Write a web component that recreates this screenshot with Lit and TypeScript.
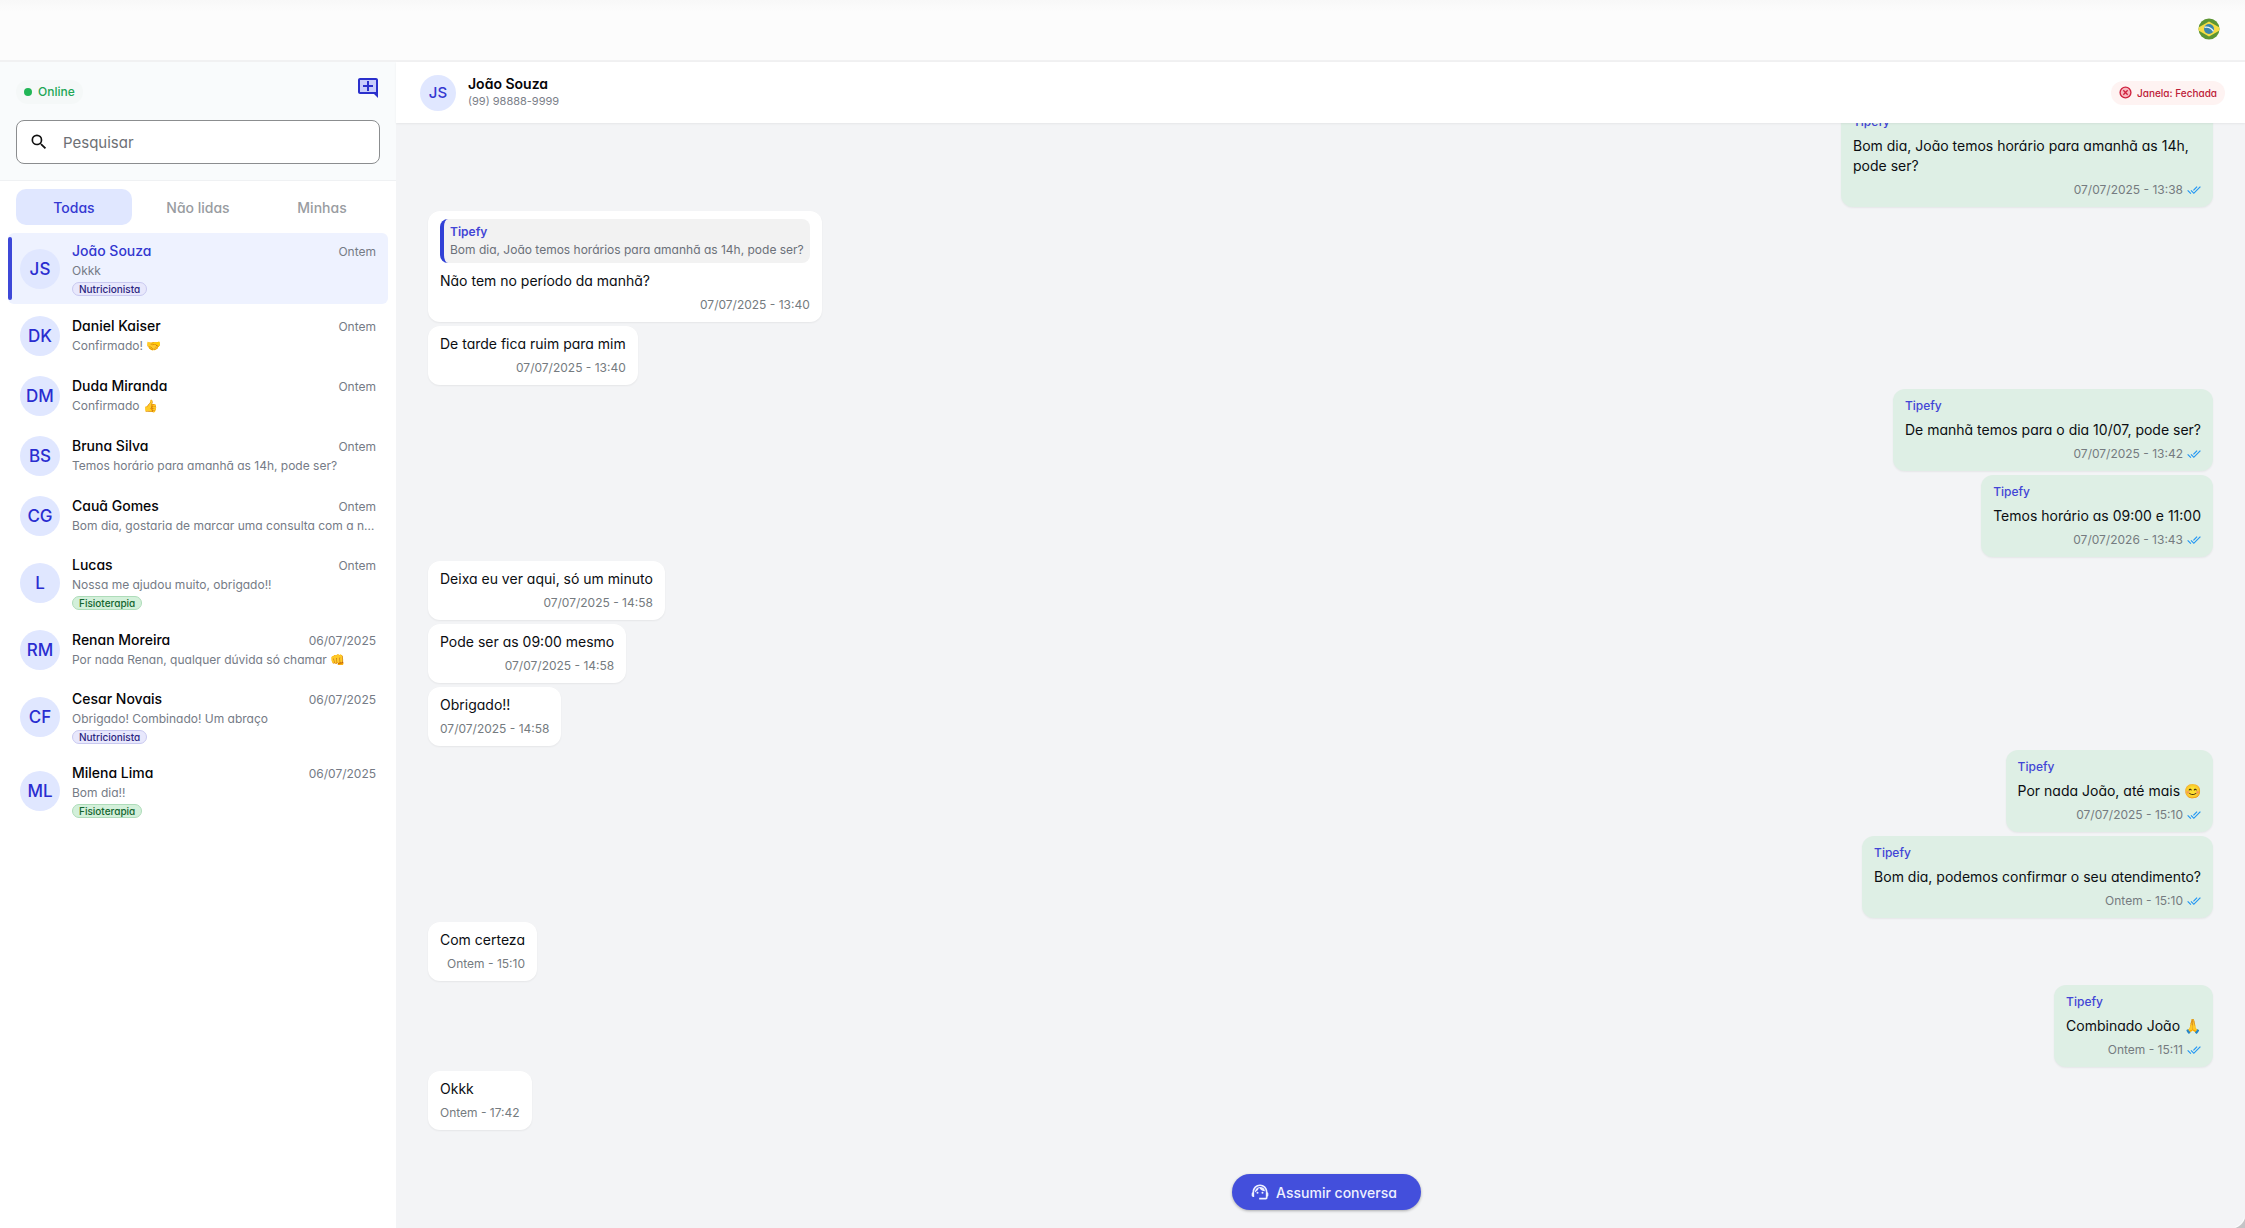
import { LitElement, html, css, nothing } from "lit";
import { customElement, property, state } from "lit/decorators.js";

interface Chat {
  initials: string;
  name: string;
  preview: string;
  date: string;
  tag?: "Nutricionista" | "Fisioterapia";
}

interface Message {
  out?: boolean;
  text: string;
  time: string;
  quote?: string;
}

const CHATS: Chat[] = [
  { initials: "JS", name: "João Souza", preview: "Okkk", date: "Ontem", tag: "Nutricionista" },
  { initials: "DK", name: "Daniel Kaiser", preview: "Confirmado! 🤝", date: "Ontem" },
  { initials: "DM", name: "Duda Miranda", preview: "Confirmado 👍", date: "Ontem" },
  { initials: "BS", name: "Bruna Silva", preview: "Temos horário para amanhã as 14h, pode ser?", date: "Ontem" },
  { initials: "CG", name: "Cauã Gomes", preview: "Bom dia, gostaria de marcar uma consulta com a nutricionista", date: "Ontem" },
  { initials: "L", name: "Lucas", preview: "Nossa me ajudou muito, obrigado!!", date: "Ontem", tag: "Fisioterapia" },
  { initials: "RM", name: "Renan Moreira", preview: "Por nada Renan, qualquer dúvida só chamar 👊", date: "06/07/2025" },
  { initials: "CF", name: "Cesar Novais", preview: "Obrigado! Combinado! Um abraço", date: "06/07/2025", tag: "Nutricionista" },
  { initials: "ML", name: "Milena Lima", preview: "Bom dia!!", date: "06/07/2025", tag: "Fisioterapia" },
];

const MESSAGES: Message[] = [
  { out: true, text: "Bom dia, João temos horário para amanhã as 14h, pode ser?", time: "07/07/2025 - 13:38" },
  { text: "Não tem no período da manhã?", time: "07/07/2025 - 13:40", quote: "Bom dia, João temos horários para amanhã as 14h, pode ser?" },
  { text: "De tarde fica ruim para mim", time: "07/07/2025 - 13:40" },
  { out: true, text: "De manhã temos para o dia 10/07, pode ser?", time: "07/07/2025 - 13:42" },
  { out: true, text: "Temos horário as 09:00 e 11:00", time: "07/07/2026 - 13:43" },
  { text: "Deixa eu ver aqui, só um minuto", time: "07/07/2025 - 14:58" },
  { text: "Pode ser as 09:00 mesmo", time: "07/07/2025 - 14:58" },
  { text: "Obrigado!!", time: "07/07/2025 - 14:58" },
  { out: true, text: "Por nada João, até mais 😊", time: "07/07/2025 - 15:10" },
  { out: true, text: "Bom dia, podemos confirmar o seu atendimento?", time: "Ontem - 15:10" },
  { text: "Com certeza", time: "Ontem - 15:10" },
  { out: true, text: "Combinado João 🙏", time: "Ontem - 15:11" },
  { text: "Okkk", time: "Ontem - 17:42" },
];

@customElement("chat-row")
export class ChatRow extends LitElement {
  @property({ attribute: false }) chat!: Chat;
  @property({ type: Boolean, reflect: true }) selected = false;

  static styles = css`
    :host { display: block; padding: 0 8px; }
    .row {
      position: relative;
      display: flex;
      align-items: center;
      gap: 12px;
      width: 100%;
      min-height: 57px;
      padding: 8px 12px;
      border: 0;
      border-radius: 6px;
      background: none;
      font: inherit;
      font-feature-settings: inherit;
      text-align: left;
      cursor: pointer;
    }
    .row.selected { background: #eef2ff; }
    .row.selected::before {
      content: "";
      position: absolute;
      inset: 4px auto 4px 0;
      width: 4px;
      border-radius: 2px;
      background: #3d48d8;
    }
    .avatar {
      flex: none;
      display: grid;
      place-items: center;
      width: 40px;
      height: 40px;
      border-radius: 50%;
      background: #e0e7ff;
      color: #2a2dd0;
      font-size: 17px;
      font-weight: 500;
    }
    .body { flex: 1; min-width: 0; display: block; }
    .top { display: flex; justify-content: space-between; align-items: baseline; }
    .name { font-size: 14px; line-height: 20px; font-weight: 500; color: #050508; }
    .selected .name { color: #3338d0; }
    .date, .preview { font-size: 12px; line-height: 19px; color: #757b86; }
    .preview { display: block; white-space: nowrap; overflow: hidden; text-overflow: ellipsis; }
    .tag {
      display: block;
      width: max-content;
      margin-top: 2px;
      padding: 0 6px;
      border: 1px solid;
      border-radius: 8px;
      font-size: 10px;
      line-height: 12px;
      font-weight: 500;
    }
    .purple { color: #2b2580; background: #e8e8fc; border-color: #c9c9f0; }
    .green { color: #14652f; background: #d3f0da; border-color: #aedcb9; }
  `;

  render() {
    const c = this.chat;
    return html`
      <button class="row ${this.selected ? "selected" : ""}" type="button">
        <span class="avatar">${c.initials}</span>
        <span class="body">
          <span class="top"><span class="name">${c.name}</span><span class="date">${c.date}</span></span>
          <span class="preview">${c.preview}</span>
          ${c.tag ? html`<span class="tag ${c.tag === "Nutricionista" ? "purple" : "green"}">${c.tag}</span>` : nothing}
        </span>
      </button>`;
  }
}

@customElement("chat-message")
export class ChatMessage extends LitElement {
  @property({ attribute: false }) message!: Message;

  static styles = css`
    :host { display: flex; }
    .bubble {
      max-width: 348px;
      padding: 8px 12px;
      border-radius: 12px;
      background: #fff;
      box-shadow: 0 1px 2px rgb(0 0 0 / 6%);
      color: #0b0e12;
    }
    .bubble.quoted { max-width: none; }
    .bubble.out { margin-left: auto; background: #deefe5; }
    .author { font-size: 12px; line-height: 18px; font-weight: 500; color: #4245d6; }
    .quote .author { font-weight: 600; }
    .text { margin: 0; font-size: 14px; line-height: 20px; }
    .out .text { margin-top: 5px; }
    .quote {
      margin-bottom: 8px;
      padding: 4px 6px;
      border-left: 4px solid #3040d6;
      border-radius: 8px;
      background: #f2f2f2;
      font-size: 12px;
      line-height: 18px;
      color: #6b7079;
    }
    .meta {
      display: flex;
      justify-content: flex-end;
      align-items: center;
      gap: 4px;
      margin-top: 4px;
      font-size: 12px;
      line-height: 19px;
      color: #757b80;
    }
    .check { width: 14px; height: 14px; fill: #2196f3; }
  `;

  render() {
    const m = this.message;
    return html`
      <article class="bubble ${m.out ? "out" : ""} ${m.quote ? "quoted" : ""}">
        ${m.out ? html`<div class="author">Tipefy</div>` : nothing}
        ${m.quote ? html`<div class="quote"><div class="author">Tipefy</div>${m.quote}</div>` : nothing}
        <p class="text">${m.text}</p>
        <div class="meta">
          <span>${m.time}</span>
          ${m.out
            ? html`<svg class="check" viewBox="0 0 24 24" aria-label="Lida"><path d="m18 7-1.4-1.4-6.3 6.3 1.4 1.4zm4.200-1.400L11.700 16.200l-4.200-4.200-1.400 1.400 5.600 5.600 12-12zM.4 13.400 6 19l1.400-1.400L1.800 12z"/></svg>`
            : nothing}
        </div>
      </article>`;
  }
}

@customElement("app-root")
export class AppRoot extends LitElement {
  @state() private tab = "Todas";

  static styles = css`
    :host {
      display: block;
      font-family: Inter, "Liberation Sans", sans-serif;
      font-feature-settings: "cv11";
    }
    * { box-sizing: border-box; }
    .page { position: relative; display: flex; flex-direction: column; height: 100vh; min-height: 600px; background: #fff; }
    .corner {
      position: absolute;
      right: 0;
      bottom: 0;
      width: 10px;
      height: 10px;
      background: radial-gradient(circle at -4px -4px, transparent 13px, #fff 14px, #c4c4c6 15px);
    }
    .topbar {
      flex: none;
      display: flex;
      justify-content: flex-end;
      align-items: center;
      height: 62px;
      padding: 0 25px 2px;
      border-bottom: 2px solid #f1f1f2;
      background: linear-gradient(#f8f8f8, #fcfcfc 12px);
    }
    button { font-family: inherit; font-feature-settings: inherit; cursor: pointer; }
    .language { display: flex; padding: 0; border: 0; background: none; }
    .flag { width: 22px; height: 22px; }
    .main { flex: 1; min-height: 0; display: flex; }
    .sidebar { flex: none; width: 396px; background: #fff; }
    .panel { padding: 12px 16px 16px; background: #f9fbfc; border-bottom: 1px solid #eff1f3; }
    .status-line { display: flex; justify-content: space-between; align-items: flex-start; }
    .online {
      display: flex;
      align-items: center;
      gap: 6px;
      margin-top: 6px;
      padding: 0 8px;
      border-radius: 12px;
      background: #f5f8f8;
      font-size: 12px;
      line-height: 24px;
      font-weight: 500;
      color: #21a655;
    }
    .dot { width: 8px; height: 8px; border-radius: 50%; background: #22b657; }
    .new-chat { display: flex; margin: 2px 0 0; padding: 0; border: 0; background: none; }
    .new-chat svg { width: 24px; height: 24px; }
    .search {
      display: flex;
      align-items: center;
      gap: 12px;
      height: 44px;
      margin-top: 16px;
      padding: 0 12px;
      border: 1px solid #8b8d8f;
      border-radius: 8px;
      background: #fff;
    }
    .search svg { flex: none; width: 20px; height: 20px; }
    .search input {
      flex: 1;
      min-width: 0;
      border: 0;
      outline: 0;
      background: none;
      font: inherit;
      font-feature-settings: inherit;
      font-size: 15px;
    }
    .search input::placeholder { color: #6d7075; }
    .tabs { display: flex; gap: 8px; padding: 8px 16px; }
    .chats { display: flex; flex-direction: column; gap: 3px; }
    .tab {
      flex: 1;
      height: 36px;
      padding: 0;
      border: 0;
      border-radius: 10px;
      background: none;
      font-size: 14px;
      font-weight: 500;
      color: #999ca1;
    }
    .tab.active { background: #e0e7ff; color: #3539d2; }
    .chat { flex: 1; min-width: 0; position: relative; display: flex; flex-direction: column; background: #f3f4f6; }
    .header {
      flex: none;
      position: relative;
      display: flex;
      align-items: center;
      gap: 12px;
      height: 61px;
      padding: 0 20px 0 24px;
      background: #fff;
      box-shadow: 0 1px 2px rgb(0 0 0 / 6%);
    }
    .avatar {
      display: grid;
      place-items: center;
      width: 36px;
      height: 36px;
      border-radius: 50%;
      background: #e0e7ff;
      color: #3338d0;
      font-size: 15px;
      font-weight: 500;
    }
    .who { flex: 1; }
    .who h1 { margin: 0; font-size: 14px; line-height: 18px; font-weight: 600; color: #050508; }
    .who p { margin: 0; font-size: 11px; line-height: 17px; color: #7b8089; }
    .window {
      display: flex;
      align-items: center;
      gap: 5px;
      padding: 0 8px;
      border-radius: 12px;
      background: #fef3f2;
      font-size: 10px;
      line-height: 24px;
      font-weight: 500;
      color: #bd2038;
    }
    .window svg { width: 13px; height: 13px; }
    .messages {
      flex: 1;
      min-height: 0;
      overflow: hidden;
      display: flex;
      flex-direction: column;
      justify-content: flex-end;
      gap: 4px;
      padding: 0 32px 98px;
    }
    .actions {
      position: absolute;
      inset: auto 0 18px 12px;
      display: flex;
      justify-content: center;
    }
    .take {
      display: flex;
      align-items: center;
      gap: 6px;
      height: 36px;
      padding: 0 24px 0 18px;
      border: 0;
      border-radius: 18px;
      background: #434fdc;
      box-shadow: 0 1px 3px rgb(0 0 0 / 30%);
      color: #eef0ff;
      font-size: 14px;
      font-weight: 500;
    }
    .take svg { width: 20px; height: 20px; fill: currentColor; }
  `;

  render() {
    return html`
      <div class="page">
        <header class="topbar">
          <button class="language" type="button" aria-label="Português (Brasil)">
            <svg class="flag" viewBox="0 0 22 22">
              <clipPath id="round"><circle cx="11" cy="11" r="10.500" /></clipPath>
              <g clip-path="url(#round)">
                <path d="M0 0h22v22H0z" fill="#5d9634" />
                <path d="M11 3.500 24 11 11 18.500-2 11z" fill="#f6dc45" />
                <circle cx="11" cy="11" r="5" fill="#3b87ad" />
                <path d="M6.500 9.300c3.500-.7 7 .8 9 4" fill="none" stroke="#e8f3f5" stroke-width="1.400" />
              </g>
            </svg>
          </button>
        </header>
        <div class="main">
          <aside class="sidebar">
            <div class="panel">
              <div class="status-line">
                <span class="online"><span class="dot"></span>Online</span>
                <button class="new-chat" type="button" aria-label="Nova conversa">
                  <svg viewBox="0 0 24 24">
                    <path d="M3 3h18v14H3z" fill="#c9cdfb" />
                    <path d="M22 4c0-1.100-.9-2-2-2H4c-1.100 0-2 .9-2 2v12c0 1.100.9 2 2 2h14l4 4V4zm-2 12H4V4h16v12zm-9-1h2v-4h4V9h-4V5h-2v4H7v2h4z" fill="#2b30cc" />
                  </svg>
                </button>
              </div>
              <label class="search">
                <svg viewBox="0 0 24 24"><path d="M15.500 14h-.79l-.28-.27A6.470 6.470 0 0 0 16 9.500 6.500 6.500 0 1 0 9.500 16c1.610 0 3.090-.59 4.230-1.570l.27.28v.79l5 4.990L20.490 19l-4.990-5zm-6 0a4.500 4.500 0 1 1 0-9 4.500 4.500 0 0 1 0 9z" fill="#111" /></svg>
                <input type="text" placeholder="Pesquisar" aria-label="Pesquisar" />
              </label>
            </div>
            <nav class="tabs">
              ${["Todas", "Não lidas", "Minhas"].map(
                (t) => html`<button type="button" class="tab ${t === this.tab ? "active" : ""}" @click=${() => (this.tab = t)}>${t}</button>`
              )}
            </nav>
            <div class="chats">
              ${CHATS.map((c, i) => html`<chat-row .chat=${c} ?selected=${i === 0}></chat-row>`)}
            </div>
          </aside>
          <main class="chat">
            <header class="header">
              <span class="avatar">JS</span>
              <div class="who">
                <h1>João Souza</h1>
                <p>(99) 98888-9999</p>
              </div>
              <span class="window">
                <svg viewBox="0 0 24 24" fill="#f8b9c0" stroke="#cf2340" stroke-width="2.500">
                  <circle cx="12" cy="12" r="10" /><path d="m8 8 8 8m0-8-8 8" />
                </svg>
                Janela: Fechada
              </span>
            </header>
            <section class="messages">
              ${MESSAGES.map((m) => html`<chat-message .message=${m}></chat-message>`)}
            </section>
            <div class="actions">
              <button class="take" type="button">
                <svg viewBox="0 0 24 24"><path d="M21 12.220C21 6.730 16.740 3 12 3c-4.690 0-9 3.650-9 9.280-.6.340-1 .98-1 1.720v2c0 1.100.9 2 2 2h1v-6.100a7 7 0 0 1 14 0V19h-8v2h8c1.100 0 2-.9 2-2v-1.220c.59-.31 1-.92 1-1.640v-2.300c0-.7-.41-1.310-1-1.620z" /><circle cx="9" cy="13" r="1.200" /><circle cx="15" cy="13" r="1.200" /><path d="M18 11.030A6.040 6.040 0 0 0 12.050 6c-3.030 0-6.290 2.510-6.030 6.450a8.070 8.070 0 0 0 4.860-5.890c1.310 2.630 4 4.440 7.120 4.470z" /></svg>
                Assumir conversa
              </button>
            </div>
          </main>
        </div>
        <div class="corner"></div>
      </div>`;
  }
}
